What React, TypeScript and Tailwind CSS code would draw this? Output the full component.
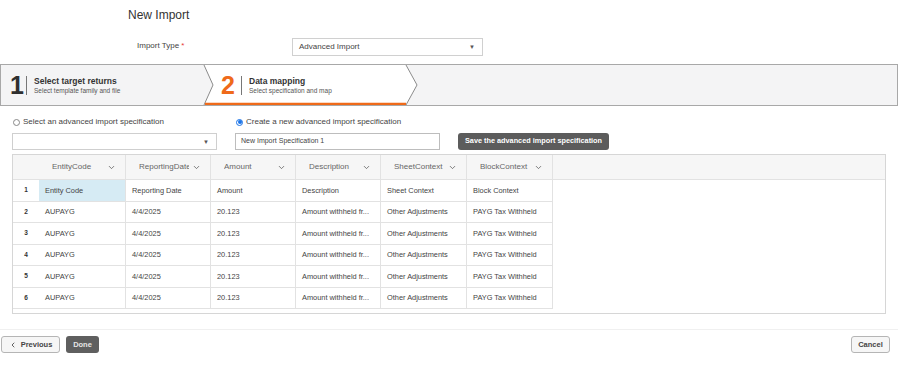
import { ChevronDown, ChevronLeft } from "lucide-react";

const columns = ["EntityCode", "ReportingDate", "Amount", "Description", "SheetContext", "BlockContext"];
const colWidths = ["w-[86px]", "w-[85px]", "w-[85px]", "w-[85px]", "w-[86px]", "w-[86px]"];

const rows = [
    ["Entity Code", "Reporting Date", "Amount", "Description", "Sheet Context", "Block Context"],
    ["AUPAYG", "4/4/2025", "20.123", "Amount withheld fr...", "Other Adjustments", "PAYG Tax Withheld"],
    ["AUPAYG", "4/4/2025", "20.123", "Amount withheld fr...", "Other Adjustments", "PAYG Tax Withheld"],
    ["AUPAYG", "4/4/2025", "20.123", "Amount withheld fr...", "Other Adjustments", "PAYG Tax Withheld"],
    ["AUPAYG", "4/4/2025", "20.123", "Amount withheld fr...", "Other Adjustments", "PAYG Tax Withheld"],
    ["AUPAYG", "4/4/2025", "20.123", "Amount withheld fr...", "Other Adjustments", "PAYG Tax Withheld"],
];

function Caret() {
    return <span className="text-[6px] leading-none text-[#555]">▼</span>;
}

function Radio({ checked }: { checked?: boolean }) {
    return checked ? (
        <span className="w-[7px] h-[7px] rounded-full border border-[#1a73e8] flex items-center justify-center shrink-0">
            <span className="w-[4px] h-[4px] rounded-full bg-[#1a73e8]" />
        </span>
    ) : (
        <span className="w-[7px] h-[7px] rounded-full border border-[#888] bg-white shrink-0" />
    );
}

export default function App() {
    return (
        <div className="w-[898px] h-[373px] bg-white text-[#333] font-['Liberation_Sans',Arial,sans-serif] flex flex-col overflow-hidden">
            {/* Title */}
            <div className="pt-[8px] pl-[128px] text-[12px] leading-[14px] text-[#333]">New Import</div>

            {/* Import type */}
            <div className="mt-[16px] flex items-center h-[18px]">
                <div className="pl-[137px] w-[292px] text-[8px] text-[#444] self-start pt-[2px]">
                    Import Type <span className="text-[#e53935]">*</span>
                </div>
                <div className="w-[191px] h-[18px] border border-[#d0d0d0] flex items-center justify-between pl-[6px] pr-[7px] text-[8px] text-[#444]">
                    <span>Advanced Import</span>
                    <Caret />
                </div>
            </div>

            {/* Stepper */}
            <div className="mt-[8px] relative h-[42px] border border-[#a8a8a8] bg-[#f4f4f5] flex">
                <svg className="absolute inset-0" width="897" height="40" viewBox="0 0 897 40">
                    <polygon points="203,0 405,0 416,20 405,40 203,40 212,20" fill="#ffffff" />
                    <polyline points="203,0 212,20 203,40" fill="none" stroke="#8a8a8a" strokeWidth="1" />
                    <polyline points="405,0 416,20 405,40" fill="none" stroke="#8a8a8a" strokeWidth="1" />
                    <line x1="204" y1="39" x2="405" y2="39" stroke="#ef6a1a" strokeWidth="2.5" />
                </svg>
                <div className="relative w-[204px] flex items-center pl-[9px]">
                    <span className="text-[25px] leading-none font-bold text-[#2f2f2f] w-[13px]">1</span>
                    <span className="ml-[3px] w-px h-[19px] bg-[#777]" />
                    <div className="ml-[7px] flex flex-col">
                        <span className="text-[8.5px] leading-[10px] font-bold text-[#333]">Select target returns</span>
                        <span className="text-[6.5px] leading-[9px] text-[#555]">Select template family and file</span>
                    </div>
                </div>
                <div className="relative flex items-center pl-[16px]">
                    <span className="text-[25px] leading-none font-bold text-[#ef6a1a] w-[15px]">2</span>
                    <span className="ml-[5px] w-px h-[19px] bg-[#777]" />
                    <div className="ml-[7px] flex flex-col">
                        <span className="text-[8.5px] leading-[10px] font-bold text-[#333]">Data mapping</span>
                        <span className="text-[6.5px] leading-[9px] text-[#555]">Select specification and map</span>
                    </div>
                </div>
            </div>

            {/* Spec options */}
            <div className="mt-[11px] flex pl-[12px] items-end">
                <div className="w-[205px] flex flex-col">
                    <label className="h-[10px] flex items-center gap-[3px] pl-[1px] text-[8px] text-[#444]">
                        <Radio />
                        Select an advanced import specification
                    </label>
                    <div className="mt-[6px] h-[17px] border border-[#cfcfcf] flex items-center justify-end pr-[7px]">
                        <Caret />
                    </div>
                </div>
                <div className="ml-[18px] w-[205px] flex flex-col">
                    <label className="h-[10px] flex items-center gap-[3px] pl-[1px] text-[8px] text-[#444]">
                        <Radio checked />
                        Create a new advanced import specification
                    </label>
                    <div className="mt-[6px] h-[17px] border border-[#bdbdbd] flex items-center pl-[5px] text-[7px] text-[#444]">
                        New Import Specification 1
                    </div>
                </div>
                <button className="ml-[18px] w-[151px] h-[17px] rounded-[3px] bg-[#5c5c5c] text-white text-[7.3px] font-bold flex items-center justify-center">
                    Save the advanced import specification
                </button>
            </div>

            {/* Grid */}
            <div className="mt-[4px] ml-[12px] w-[874px] border border-[#d6d6d6] pb-[4px]">
                <div className="flex h-[25px] bg-[#f6f6f6] border-b border-[#e2e2e2]">
                    <div className="w-[26px]" />
                    {columns.map((c, i) => (
                        <div key={c} className={`${colWidths[i]} ${i > 0 ? "border-l border-[#e2e2e2]" : ""} flex items-center justify-between pl-[13px] pr-[9px] text-[8px] text-[#666]`}>
                            <span className="w-[50px] whitespace-nowrap overflow-hidden">{c}</span>
                            <ChevronDown size={9} strokeWidth={2} className="text-[#555] shrink-0" />
                        </div>
                    ))}
                    <div className="border-l border-[#e2e2e2]" />
                </div>
                {rows.map((r, ri) => (
                    <div key={ri} className="flex h-[21.5px] w-[540px] border-b border-[#e2e2e2] text-[7.4px] text-[#444]">
                        <div className="w-[26px] flex items-center justify-center text-[6.5px] font-bold text-[#333]">{ri + 1}</div>
                        {r.map((v, ci) => (
                            <div
                                key={ci}
                                className={`${colWidths[ci]} ${ci > 0 ? "border-l border-[#e2e2e2]" : ""} ${ri === 0 && ci === 0 ? "bg-[#d6ebf4]" : ""} flex items-center pl-[6px] whitespace-nowrap overflow-hidden`}
                            >
                                {v}
                            </div>
                        ))}
                        <div className="border-l border-[#e2e2e2]" />
                    </div>
                ))}
            </div>

            {/* Footer */}
            <div className="mt-[15px] border-t border-[#f0f0f0] pt-[6px] flex items-center justify-between pl-[1px] pr-[8px]">
                <div className="flex gap-[6px]">
                    <button className="h-[17px] w-[59px] rounded-[3px] border border-[#b5b5b5] bg-[#f6f6f6] flex items-center justify-center gap-[4px] text-[7.5px] font-bold text-[#444]">
                        <ChevronLeft size={8} strokeWidth={2.5} />
                        Previous
                    </button>
                    <button className="h-[17px] w-[33px] rounded-[3px] bg-[#5f5f5f] text-[7.5px] font-bold text-[#e6e6e6]">Done</button>
                </div>
                <button className="h-[17px] w-[39px] rounded-[3px] border border-[#b5b5b5] bg-[#f6f6f6] text-[7.5px] font-bold text-[#444]">Cancel</button>
            </div>
        </div>
    );
}
